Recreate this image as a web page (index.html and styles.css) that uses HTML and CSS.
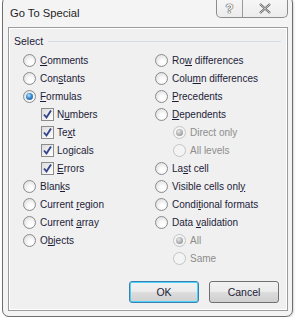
FILE: index.html
```html
<!DOCTYPE html>
<html>
<head>
  <title>Go To Special</title>
  <meta name="viewport" content="width=device-width, initial-scale=1.0" />
  <link rel="stylesheet" href="styles.css">
</head>
<body>
  <div class="window">
    <div class="titlebar">
      <span class="title">Go To Special</span>
      <div class="caption-btns">
        <span class="cap-btn help">?</span>
        <span class="cap-btn close">
          <svg width="14" height="11" viewBox="0 0 14 11"><path d="M2 1 L12 10 M12 1 L2 10" stroke="#5a5a5a" stroke-width="2.2" fill="none"/><path d="M2 1 L12 10 M12 1 L2 10" stroke="#f4f4f4" stroke-width="0.8" fill="none"/></svg>
        </span>
      </div>
    </div>

    <div class="panel">
      <div class="group-head"><span>Select</span><span class="rule"></span></div>

      <div class="columns">
        <div class="col">
          <div class="opt"><span class="radio"></span><span class="label"><u>C</u>omments</span></div>
          <div class="opt"><span class="radio"></span><span class="label">Con<u>s</u>tants</span></div>
          <div class="opt"><span class="radio checked"></span><span class="label"><u>F</u>ormulas</span></div>
          <div class="opt sub"><span class="check"><svg width="11" height="11" viewBox="0 0 11 11"><path d="M2 5.5 L4.5 8.5 L9 1.5" stroke="#34448a" stroke-width="1.9" fill="none"/></svg></span><span class="label">N<u>u</u>mbers</span></div>
          <div class="opt sub"><span class="check"><svg width="11" height="11" viewBox="0 0 11 11"><path d="M2 5.5 L4.5 8.5 L9 1.5" stroke="#34448a" stroke-width="1.9" fill="none"/></svg></span><span class="label">Te<u>x</u>t</span></div>
          <div class="opt sub"><span class="check"><svg width="11" height="11" viewBox="0 0 11 11"><path d="M2 5.5 L4.5 8.5 L9 1.5" stroke="#34448a" stroke-width="1.9" fill="none"/></svg></span><span class="label">Lo<u>g</u>icals</span></div>
          <div class="opt sub"><span class="check"><svg width="11" height="11" viewBox="0 0 11 11"><path d="M2 5.5 L4.5 8.5 L9 1.5" stroke="#34448a" stroke-width="1.9" fill="none"/></svg></span><span class="label"><u>E</u>rrors</span></div>
          <div class="opt"><span class="radio"></span><span class="label">Blan<u>k</u>s</span></div>
          <div class="opt"><span class="radio"></span><span class="label">Current <u>r</u>egion</span></div>
          <div class="opt"><span class="radio"></span><span class="label">Current <u>a</u>rray</span></div>
          <div class="opt"><span class="radio"></span><span class="label">O<u>b</u>jects</span></div>
        </div>
        <div class="col">
          <div class="opt"><span class="radio"></span><span class="label">Ro<u>w</u> differences</span></div>
          <div class="opt"><span class="radio"></span><span class="label">Colu<u>m</u>n differences</span></div>
          <div class="opt"><span class="radio"></span><span class="label"><u>P</u>recedents</span></div>
          <div class="opt"><span class="radio"></span><span class="label"><u>D</u>ependents</span></div>
          <div class="opt sub disabled"><span class="radio checked"></span><span class="label">Direct only</span></div>
          <div class="opt sub disabled"><span class="radio"></span><span class="label">All levels</span></div>
          <div class="opt"><span class="radio"></span><span class="label">La<u>s</u>t cell</span></div>
          <div class="opt"><span class="radio"></span><span class="label">Visible cells onl<u>y</u></span></div>
          <div class="opt"><span class="radio"></span><span class="label">Condi<u>t</u>ional formats</span></div>
          <div class="opt"><span class="radio"></span><span class="label">Data <u>v</u>alidation</span></div>
          <div class="opt sub disabled"><span class="radio checked"></span><span class="label">All</span></div>
          <div class="opt sub disabled"><span class="radio"></span><span class="label">Same</span></div>
        </div>
      </div>

      <div class="buttons">
        <button class="btn default">OK</button>
        <button class="btn">Cancel</button>
      </div>
    </div>
  </div>
</body>
</html>
```

FILE: styles.css
```css
body {
  margin: 0;
  background-color: #ffffff;
  font-family: "Liberation Sans", Arial, sans-serif;
  font-size: 10px;
  color: #1c1c38;
}
.window {
  width: 291px;
  margin: -4px 0 0 2px;
  padding: 0 4px 5px 5px;
  box-sizing: border-box;
  border: 1px solid #6e6e6e;
  border-radius: 7px;
  background-color: #f4f4f5;
  box-shadow: 1px 1px 2px rgba(0,0,0,0.15);
}
.titlebar {
  height: 30px;
  display: flex;
  justify-content: space-between;
  align-items: flex-start;
}
.title {
  margin: 10px 0 0 2px;
  font-size: 11.2px;
  color: #1e1e1e;
}
.caption-btns {
  display: flex;
  height: 20px;
  border: 1px solid #8c8c8c;
  border-top: none;
  border-radius: 0 0 5px 5px;
  background: linear-gradient(#f8f8f8, #ececec);
}
.cap-btn {
  display: flex;
  align-items: center;
  justify-content: center;
  padding-top: 3px;
  box-sizing: border-box;
}
.help {
  width: 26px;
  border-right: 1px solid #9a9a9a;
  font-size: 13px;
  font-weight: bold;
  color: #f6f6f6;
  text-shadow: 0 0 1px #444, 0 0 1px #444, 0 0 1px #444;
}
.close {
  width: 44px;
}
.panel {
  height: 284px;
  box-sizing: border-box;
  border: 1px solid #9c9c9c;
  box-shadow: inset 0 0 0 1px #ffffff;
  background-color: #f0f0f0;
  padding: 6px 6px 0 5px;
}
.group-head {
  display: flex;
  align-items: center;
  height: 14px;
  font-size: 10.5px;
}
.rule {
  flex: 1;
  height: 1px;
  margin-left: 5px;
  background-color: #d3dde4;
}
.columns {
  display: grid;
  grid-template-columns: 132px 1fr;
  margin-top: 3px;
  padding-left: 9px;
}
.opt {
  height: 18px;
  display: flex;
  align-items: center;
  white-space: nowrap;
}
.opt u {
  text-decoration-thickness: 1px;
  text-underline-offset: 1px;
}
.opt.sub {
  padding-left: 18px;
}
.opt.disabled {
  color: #8d8d8d;
}
.radio {
  width: 11px;
  height: 11px;
  border-radius: 50%;
  border: 1px solid #8a8c8e;
  background: radial-gradient(circle at 60% 65%, #ffffff 20%, #dadada 90%);
  margin-right: 4px;
  position: relative;
  flex: none;
}
.radio.checked::after {
  content: "";
  position: absolute;
  left: 2px;
  top: 2px;
  width: 7px;
  height: 7px;
  border-radius: 50%;
  background: radial-gradient(circle at 40% 35%, #b8e4fb 0%, #3a8ad0 45%, #1b4f94 100%);
}
.disabled .radio {
  border-color: #c2c4c6;
  background: #f4f4f4;
}
.disabled .radio.checked::after {
  background: radial-gradient(circle at 40% 35%, #e8e8e8 0%, #a8a8a8 60%, #8e8e8e 100%);
}
.check {
  width: 11px;
  height: 11px;
  border: 1px solid #8a8c8e;
  background: linear-gradient(135deg, #dcdcdc, #ffffff);
  margin-right: 3px;
  display: flex;
  align-items: center;
  justify-content: center;
  flex: none;
}
.buttons {
  display: flex;
  justify-content: flex-end;
  gap: 10px;
  margin-top: 14px;
  padding-right: 2px;
}
.btn {
  width: 70px;
  height: 22px;
  border: 1px solid #707070;
  border-radius: 3px;
  background: linear-gradient(#f2f2f2 0%, #ebebeb 50%, #dddddd 51%, #cfcfcf 100%);
  font-family: "Liberation Sans", Arial, sans-serif;
  font-size: 10.5px;
  color: #1c1c38;
  padding: 0;
}
.btn.default {
  border-color: #3c7fb1;
  box-shadow: inset 0 0 0 1px #48d3fb;
}
```
